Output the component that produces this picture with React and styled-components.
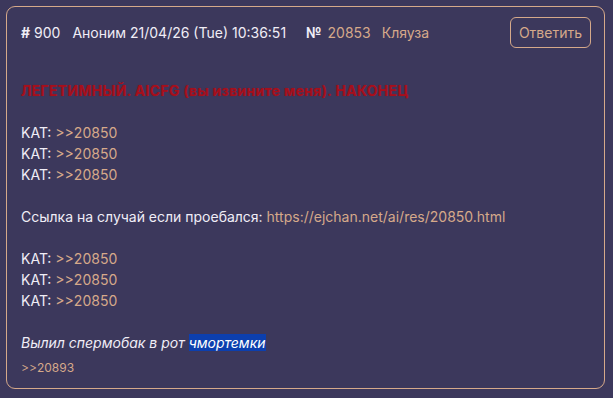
import React from "react";
import styled, { createGlobalStyle } from "styled-components";

const Global = createGlobalStyle`
  html, body {
    margin: 0;
    padding: 0;
    background: #3c385c;
    font-family: Inter, "Noto Sans", sans-serif;
  }
`;

const Page = styled.div`
  padding: 6px 8px 9px 6px;
`;

const Card = styled.article`
  border: 1px solid #d6a98a;
  border-radius: 9px;
  padding: 10px 13px 11px 14px;
  color: #f0edf6;
  font-size: 14px;
`;

const Header = styled.header`
  display: flex;
  align-items: center;
  height: 31px;
`;

const Meta = styled.span`
  margin-right: ${(p) => p.gap || 12}px;
  color: ${(p) => (p.accent ? "#d6a98a" : "#f0edf6")};
  font-weight: 400;
  white-space: nowrap;
`;

const Strong = styled.b`
  font-weight: 700;
`;

const ReplyButton = styled.button`
  margin-left: auto;
  height: 31px;
  padding: 0 8px;
  border: 1px solid #d6a98a;
  border-radius: 6px;
  background: transparent;
  color: #d6a98a;
  font-family: inherit;
  font-size: 14px;
`;

const Body = styled.div`
  margin-top: 32px;
  line-height: 21px;
  font-weight: 400;
`;

const Title = styled.div`
  color: #a60f1c;
  font-weight: 700;
  letter-spacing: 0.3px;
  text-shadow: 0 0 1px rgba(166, 15, 28, 0.6);
`;

const Line = styled.div`
  min-height: 21px;
  font-style: ${(p) => (p.italic ? "italic" : "normal")};
`;

const Link = styled.a`
  color: #d6a98a;
  font-weight: 400;
  text-decoration: none;
`;

const Mark = styled.span`
  background: #0c3fae;
  color: #ffffff;
`;

const Replies = styled.div`
  margin-top: 6px;
  font-size: 12px;
  line-height: 18px;
`;

const kat = (key) => (
  <Line key={key}>
    KAT: <Link href="#">&gt;&gt;20850</Link>
  </Line>
);

export default function App() {
  return (
    <Page>
      <Global />
      <Card>
        <Header>
          <Meta>
            <Strong>#</Strong> 900
          </Meta>
          <Meta gap={20}>Аноним 21/04/26 (Tue) 10:36:51</Meta>
          <Meta gap={6}>
            <Strong>№</Strong>
          </Meta>
          <Meta accent gap={11}>20853</Meta>
          <Meta accent>Кляуза</Meta>
          <ReplyButton>Ответить</ReplyButton>
        </Header>
        <Body>
          <Title>ЛЕГЕТИМНЫЙ. AICFG (вы извините меня). НАКОНЕЦ</Title>
          <Line />
          {[1, 2, 3].map(kat)}
          <Line />
          <Line>
            Ссылка на случай если проебался:{" "}
            <Link href="#">https://ejchan.net/ai/res/20850.html</Link>
          </Line>
          <Line />
          {[4, 5, 6].map(kat)}
          <Line />
          <Line italic>
            Вылил спермобак в рот <Mark>чмортемки</Mark>
          </Line>
        </Body>
        <Replies>
          <Link href="#">&gt;&gt;20893</Link>
        </Replies>
      </Card>
    </Page>
  );
}
